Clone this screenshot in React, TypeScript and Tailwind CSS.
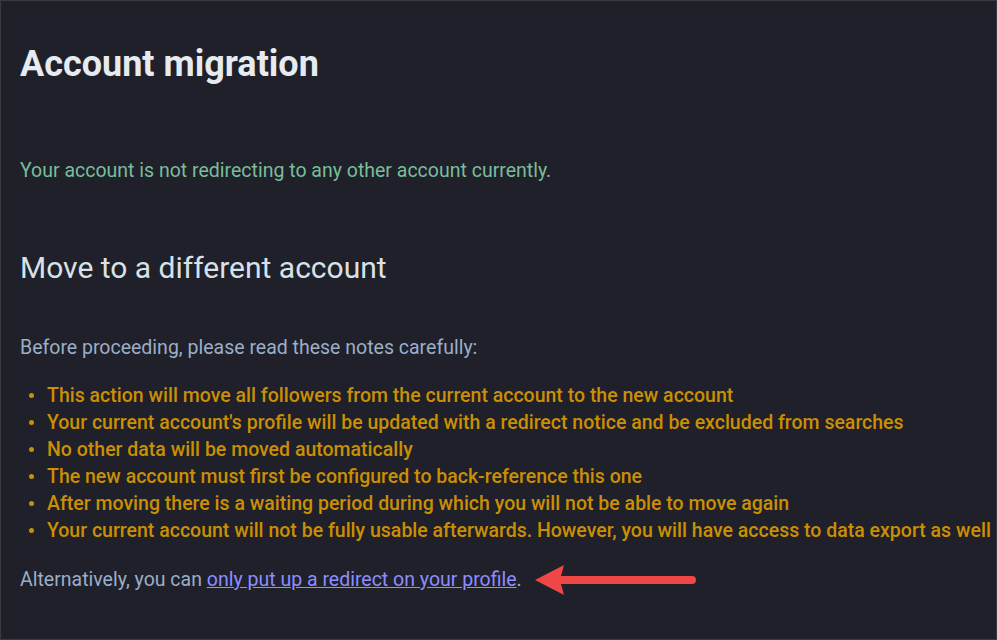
import React from "react";

const notes = [
  "This action will move all followers from the current account to the new account",
  "Your current account's profile will be updated with a redirect notice and be excluded from searches",
  "No other data will be moved automatically",
  "The new account must first be configured to back-reference this one",
  "After moving there is a waiting period during which you will not be able to move again",
  "Your current account will not be fully usable afterwards. However, you will have access to data export as well",
];

const App = () => {
  return (
    <div className="w-[997px] h-[640px] bg-[#1f2029] border border-[#3a3b40] overflow-hidden font-['Roboto',sans-serif] pl-[19px]">
      {/* Header */}
      <h1 className="text-[36px] font-bold text-[#e6ebf0] mt-[43px] leading-[40px]">
        Account migration
      </h1>

      <p className="text-[19.5px] text-[#79bd9a] mt-[75px] leading-[24px]">
        Your account is not redirecting to any other account currently.
      </p>

      {/* Move section */}
      <h2 className="text-[30px] text-[#d9e1e8] mt-[68px] leading-[34px]">
        Move to a different account
      </h2>

      <p className="text-[19.5px] text-[#9baec8] mt-[51px] leading-[24px]">
        Before proceeding, please read these notes carefully:
      </p>

      <ul className="mt-[22px] text-[19.5px] font-medium text-[#ca8f04] leading-[27px] whitespace-nowrap">
        {notes.map((note, index) => (
          <li key={index} className="flex items-center">
            <span className="ml-[9px] mr-[13px] w-[5px] h-[5px] rounded-full bg-[#ca8f04] shrink-0" />
            {note}
          </li>
        ))}
      </ul>

      <div className="mt-[19px] h-[34px] flex items-center">
        <p className="text-[19.5px] text-[#9baec8] leading-[24px]">
          Alternatively, you can{" "}
          <a href="#" className="text-[#8c8dff] underline">
            only put up a redirect on your profile
          </a>
          .
        </p>
        {/* annotation arrow */}
        <svg width="170" height="32" viewBox="0 0 170 32" className="ml-[12px]">
          <path d="M1 16 L30 1 L27 12 L158 12 A4 4 0 0 1 158 20 L27 20 L30 31 Z" fill="#ef4646" />
        </svg>
      </div>
    </div>
  );
};

export default App;
